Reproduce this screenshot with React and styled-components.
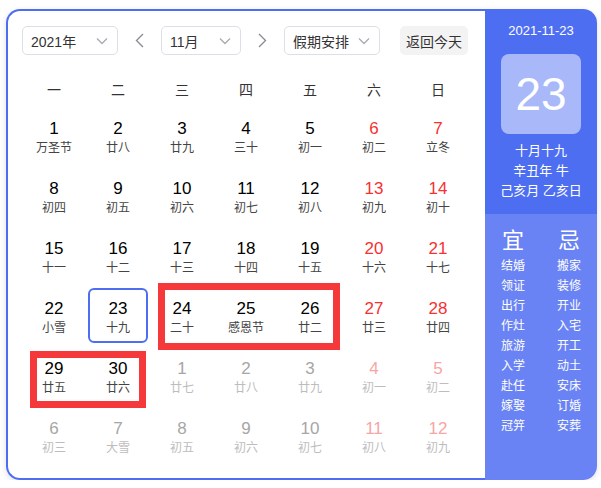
import React from "react";
import styled, { createGlobalStyle } from "styled-components";

const GlobalStyle = createGlobalStyle`
  body {
    margin: 0;
    background: #fff;
    font-family: "Liberation Sans", "Noto Sans CJK SC", sans-serif;
  }
`;

const Page = styled.div`
  padding: 9px 4px 0 6px;
`;

const Card = styled.div`
  display: flex;
  width: 591px;
  height: 471px;
  border-radius: 14px;
  box-shadow: 0 2px 6px rgba(0, 0, 0, 0.12);
`;

const LeftPane = styled.div`
  position: relative;
  box-sizing: border-box;
  width: 479px;
  height: 100%;
  padding: 15px 0 0 14px;
  border: 2px solid #4e6ef2;
  border-right: none;
  border-radius: 14px 0 0 14px;
  background: #fff;
`;

const Toolbar = styled.div`
  display: flex;
  align-items: center;
  height: 29px;
`;

const Select = styled.div`
  box-sizing: border-box;
  width: ${(p) => p.$w}px;
  height: 29px;
  display: flex;
  align-items: center;
  justify-content: space-between;
  padding: 0 9px 0 8px;
  border: 1px solid #dcdfe6;
  border-radius: 5px;
  font-size: 14px;
  color: #333;
`;

const ArrowBtn = styled.div`
  width: 43px;
  display: flex;
  justify-content: center;
  align-items: center;
`;

const TodayBtn = styled.div`
  margin-left: 20px;
  width: 68px;
  height: 29px;
  display: flex;
  align-items: center;
  justify-content: center;
  background: #f3f3f3;
  border-radius: 5px;
  font-size: 14px;
  color: #333;
`;

const WeekHead = styled.div`
  display: grid;
  grid-template-columns: repeat(7, 64px);
  margin-top: 16px;
  height: 36px;
  align-items: center;
  font-size: 14px;
  color: #333;
  text-align: center;
`;

const Grid = styled.div`
  position: relative;
  display: grid;
  grid-template-columns: repeat(7, 64px);
  grid-auto-rows: 60px;
`;

const Day = styled.div`
  box-sizing: border-box;
  margin: 1px 2px 0;
  height: 55px;
  padding-top: 9px;
  text-align: center;
  border: 2px solid ${(p) => (p.$selected ? "#4e6ef2" : "transparent")};
  border-radius: 6px;
`;

const Num = styled.div`
  font-size: 17px;
  line-height: 20px;
  color: ${(p) =>
    p.$other ? (p.$red ? "#f8a5a5" : "#a6a6a6") : p.$red ? "#f73131" : "#000"};
`;

const Lunar = styled.div`
  font-size: 12px;
  line-height: 18px;
  color: ${(p) => (p.$other ? "#bdbdbd" : "#444")};
`;

const Mark = styled.div`
  position: absolute;
  box-sizing: border-box;
  border: 7px solid #f5383a;
`;

const RightPane = styled.div`
  flex: 1;
  display: flex;
  flex-direction: column;
  border-radius: 0 14px 14px 0;
  overflow: hidden;
  color: #fff;
`;

const Today = styled.div`
  height: 205px;
  box-sizing: border-box;
  padding-top: 13px;
  background: #4e6ef2;
  display: flex;
  flex-direction: column;
  align-items: center;
`;

const DateText = styled.div`
  font-size: 13px;
  line-height: 18px;
`;

const BigDay = styled.div`
  margin: 14px 0 7px;
  width: 80px;
  height: 80px;
  border-radius: 8px;
  background: #a8b8f9;
  display: flex;
  align-items: center;
  justify-content: center;
  font-size: 46px;
`;

const InfoLine = styled.div`
  font-size: 13px;
  line-height: 20px;
`;

const Advice = styled.div`
  flex: 1;
  background: #6a83f4;
  display: grid;
  grid-template-columns: 56px 56px;
  padding-top: 15px;
  text-align: center;
`;

const AdviceCol = styled.div`
  display: flex;
  flex-direction: column;
  align-items: center;
`;

const AdviceHead = styled.div`
  font-size: 22px;
  line-height: 24px;
  margin-bottom: 3px;
`;

const AdviceItem = styled.div`
  font-size: 12px;
  line-height: 20px;
`;

const Chevron = () => (
  <svg width="12" height="8" viewBox="0 0 12 8">
    <polyline points="1,1.5 6,6.5 11,1.5" fill="none" stroke="#a8abb2" strokeWidth="1.3" />
  </svg>
);

const Arrow = ({ dir }) => (
  <svg width="9" height="15" viewBox="0 0 9 15">
    <polyline
      points={dir === "left" ? "8,1 1.5,7.5 8,14" : "1,1 7.5,7.5 1,14"}
      fill="none"
      stroke="#8a8d94"
      strokeWidth="1.4"
    />
  </svg>
);

const rows = [
  [[1, "万圣节"], [2, "廿八"], [3, "廿九"], [4, "三十"], [5, "初一"], [6, "初二"], [7, "立冬"]],
  [[8, "初四"], [9, "初五"], [10, "初六"], [11, "初七"], [12, "初八"], [13, "初九"], [14, "初十"]],
  [[15, "十一"], [16, "十二"], [17, "十三"], [18, "十四"], [19, "十五"], [20, "十六"], [21, "十七"]],
  [[22, "小雪"], [23, "十九"], [24, "二十"], [25, "感恩节"], [26, "廿二"], [27, "廿三"], [28, "廿四"]],
  [[29, "廿五"], [30, "廿六"], [1, "廿七", 1], [2, "廿八", 1], [3, "廿九", 1], [4, "初一", 1], [5, "初二", 1]],
  [[6, "初三", 1], [7, "大雪", 1], [8, "初五", 1], [9, "初六", 1], [10, "初七", 1], [11, "初八", 1], [12, "初九", 1]],
];

// weekend columns are red
const isRed = (col) => col >= 5;

const good = ["结婚", "领证", "出行", "作灶", "旅游", "入学", "赴任", "嫁娶", "冠笄"];
const bad = ["搬家", "装修", "开业", "入宅", "开工", "动土", "安床", "订婚", "安葬"];

export default function App() {
  return (
    <Page>
      <GlobalStyle />
      <Card>
        <LeftPane>
          <Toolbar>
            <Select $w={96}>
              2021年 <Chevron />
            </Select>
            <ArrowBtn>
              <Arrow dir="left" />
            </ArrowBtn>
            <Select $w={80}>
              11月 <Chevron />
            </Select>
            <ArrowBtn>
              <Arrow dir="right" />
            </ArrowBtn>
            <Select $w={96}>
              假期安排 <Chevron />
            </Select>
            <TodayBtn>返回今天</TodayBtn>
          </Toolbar>
          <WeekHead>
            {["一", "二", "三", "四", "五", "六", "日"].map((d) => (
              <div key={d}>{d}</div>
            ))}
          </WeekHead>
          <Grid>
            {rows.map((row, r) =>
              row.map(([n, l, other], c) => (
                <Day key={`${r}-${c}`} $selected={r === 3 && c === 1}>
                  <Num $red={isRed(c)} $other={!!other}>
                    {n}
                  </Num>
                  <Lunar $other={!!other}>{l}</Lunar>
                </Day>
              ))
            )}
            <Mark style={{ left: 136, top: 176, width: 182, height: 67 }} />
            <Mark style={{ left: 8, top: 244, width: 116, height: 57 }} />
          </Grid>
        </LeftPane>
        <RightPane>
          <Today>
            <DateText>2021-11-23</DateText>
            <BigDay>23</BigDay>
            <InfoLine>十月十九</InfoLine>
            <InfoLine>辛丑年 牛</InfoLine>
            <InfoLine>己亥月 乙亥日</InfoLine>
          </Today>
          <Advice>
            <AdviceCol>
              <AdviceHead>宜</AdviceHead>
              {good.map((g) => (
                <AdviceItem key={g}>{g}</AdviceItem>
              ))}
            </AdviceCol>
            <AdviceCol>
              <AdviceHead>忌</AdviceHead>
              {bad.map((b) => (
                <AdviceItem key={b}>{b}</AdviceItem>
              ))}
            </AdviceCol>
          </Advice>
        </RightPane>
      </Card>
    </Page>
  );
}
